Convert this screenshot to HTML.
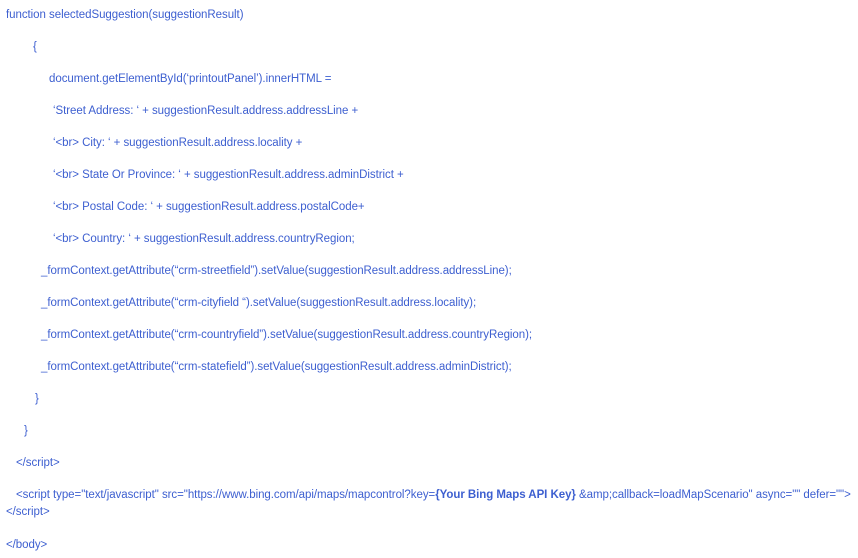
<!DOCTYPE html>
<html><head><meta charset="utf-8"><style>
body{margin:0;width:858px;height:558px;background:#fff;position:relative;overflow:hidden}
div{position:absolute;white-space:nowrap;font-family:"Liberation Sans",sans-serif;font-size:11.5px;letter-spacing:-0.05px;color:#3d5fd0;line-height:14px}
b{font-weight:bold}
</style></head><body>
<div style="left:6px;top:8px">function selectedSuggestion(suggestionResult)</div>
<div style="left:33px;top:40px">{</div>
<div style="left:49px;top:72px">document.getElementById(‘printoutPanel’).innerHTML =</div>
<div style="left:53px;top:104px">‘Street Address: ‘ + suggestionResult.address.addressLine +</div>
<div style="left:53px;top:136px">‘&lt;br&gt; City: ‘ + suggestionResult.address.locality +</div>
<div style="left:53px;top:168px">‘&lt;br&gt; State Or Province: ‘ + suggestionResult.address.adminDistrict +</div>
<div style="left:53px;top:200px">‘&lt;br&gt; Postal Code: ‘ + suggestionResult.address.postalCode+</div>
<div style="left:53px;top:232px">‘&lt;br&gt; Country: ‘ + suggestionResult.address.countryRegion;</div>
<div style="left:41px;top:264px">_formContext.getAttribute(“crm-streetfield”).setValue(suggestionResult.address.addressLine);</div>
<div style="left:41px;top:296px">_formContext.getAttribute(“crm-cityfield “).setValue(suggestionResult.address.locality);</div>
<div style="left:41px;top:328px">_formContext.getAttribute(“crm-countryfield”).setValue(suggestionResult.address.countryRegion);</div>
<div style="left:41px;top:360px">_formContext.getAttribute(“crm-statefield”).setValue(suggestionResult.address.adminDistrict);</div>
<div style="left:35px;top:392px">}</div>
<div style="left:24px;top:424px">}</div>
<div style="left:16px;top:456px">&lt;/script&gt;</div>
<div style="left:16px;top:488px">&lt;script type="text/javascript" src="https://www.bing.com/api/maps/mapcontrol?key=<b>{Your Bing Maps API Key}</b> &amp;amp;callback=loadMapScenario" async="" defer=""&gt;</div>
<div style="left:6px;top:505px">&lt;/script&gt;</div>
<div style="left:6px;top:538px">&lt;/body&gt;</div>
</body></html>
